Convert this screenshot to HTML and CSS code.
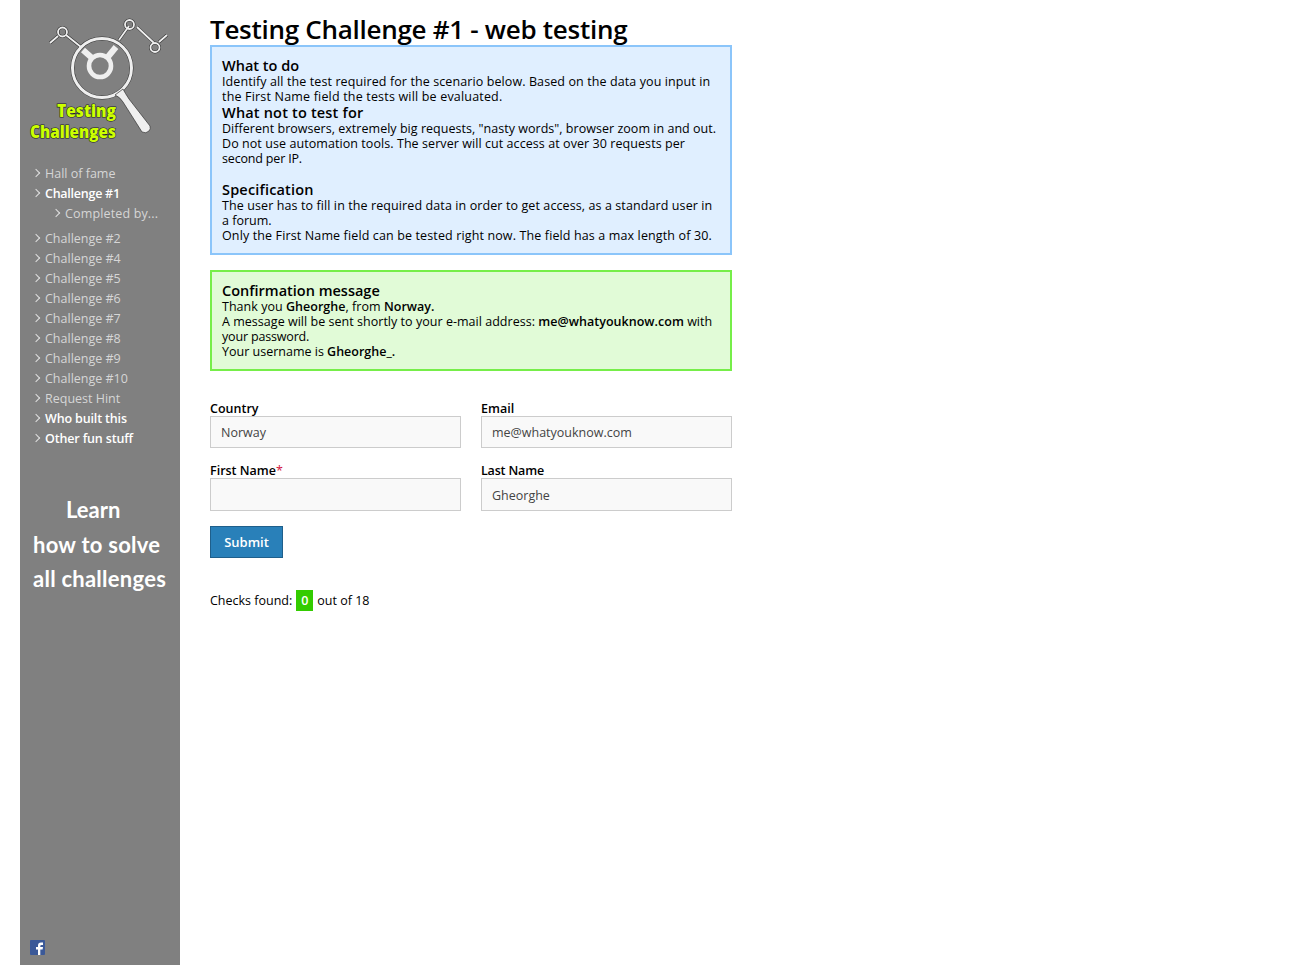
FILE: index.html
```
<!DOCTYPE html>
<html lang="en">
<head>
<meta charset="utf-8">
<title>Testing Challenge #1 - web testing</title>
<link rel="stylesheet" href="styles.css">
</head>
<body>
<aside class="sidebar">
  <svg class="logo" width="140" height="130" viewBox="0 0 140 130" role="img" aria-label="Testing Challenges">
    <g fill="none" stroke="#333" stroke-width="3">
      <path d="M20 28l8-7M36 20l15 12M89 25l10-14M107 12l17 16M129 27l8-7"/>
      <circle cx="32.500" cy="17" r="4.500"/><circle cx="99.500" cy="9.500" r="4.500"/><circle cx="125" cy="32.500" r="4.500"/>
      <circle cx="72" cy="53" r="29.500" stroke-width="4"/>
    </g>
    <g fill="none" stroke="#efefef" stroke-width="1.800">
      <path d="M20 28l8-7M36 20l15 12M89 25l10-14M107 12l17 16M129 27l8-7"/>
      <circle cx="32.500" cy="17" r="4.500"/><circle cx="99.500" cy="9.500" r="4.500"/><circle cx="125" cy="32.500" r="4.500"/>
      <circle cx="72" cy="53" r="29.500" stroke-width="3"/>
      <circle cx="70" cy="51" r="11" stroke-width="4.600"/>
      <path d="M53 35l9 8M86 32l-9 11" stroke-width="6"/>
    </g>
    <path d="M85 80l8-6q2 4 6 10l21 27q1 3-1 5-3 3-7 1L93 87q-3-5-8-7z" fill="#efefef" stroke="#333" stroke-width=".7"/>
    <g class="logo-text">
      <text x="27" y="102" textLength="59" lengthAdjust="spacingAndGlyphs">Testing</text>
      <text x="0" y="123" textLength="86" lengthAdjust="spacingAndGlyphs">Challenges</text>
    </g>
  </svg>
  <nav class="menu">
    <a class="item" href="#">Hall of fame</a>
    <a class="item active narrow" href="#">Challenge #1</a>
    <a class="item sub" href="#">Completed by...</a>
    <a class="item" href="#">Challenge #2</a>
    <a class="item" href="#">Challenge #4</a>
    <a class="item" href="#">Challenge #5</a>
    <a class="item" href="#">Challenge #6</a>
    <a class="item" href="#">Challenge #7</a>
    <a class="item" href="#">Challenge #8</a>
    <a class="item" href="#">Challenge #9</a>
    <a class="item" href="#">Challenge #10</a>
    <a class="item" href="#">Request Hint</a>
    <a class="item active" href="#">Who built this</a>
    <a class="item active" href="#">Other fun stuff</a>
  </nav>
  <div class="learn"><span class="first">Learn</span><span>how to solve</span><span>all challenges</span></div>
  <svg class="fb" width="15" height="15" viewBox="0 0 15 15"><rect width="15" height="15" rx="1" fill="#3b5998"/><path d="M8 15V9.500H6V7h2V5.500Q8 2.500 11 2.500h2V5h-1.500Q10.300 5 10.300 6v1H13l-.4 2.500h-2.300V15z" fill="#fff"/></svg>
</aside>
<main class="content">
  <h1>Testing Challenge #1 - web testing</h1>
  <section class="box info">
    <h2>What to do</h2>
    <p><span class="ls10">Identify all the test required for the scenario below. Based on the data you input in</span><br>
    <span class="ls18">the First Name field the tests will be evaluated.</span></p>
    <h2 class="ls18">What not to test for</h2>
    <p><span class="ls3">Different browsers, extremely big requests, "nasty words", browser zoom in and out.</span><br>
    <span class="ls7">Do not use automation tools. The server will cut access at over 30 requests per</span><br>
    <span class="lsn">second per IP.</span></p>
    <h2 class="spec ls18">Specification</h2>
    <p><span class="ls10">The user has to fill in the required data in order to get access, as a standard user in</span><br>
    a forum.<br>
    <span class="ls13">Only the First Name field can be tested right now. The field has a max length of 30.</span></p>
  </section>
  <section class="box ok">
    <h2>Confirmation message</h2>
    <p><span class="ls3">Thank you <b>Gheorghe</b>, from <b>Norway.</b></span><br>
    <span class="ls3">A message will be sent shortly to your e-mail address: <b>me@whatyouknow.com</b> with</span><br>
    <span class="lsn">your password.</span><br>
    Your username is <b>Gheorghe_.</b></p>
  </section>
  <form class="form">
    <label>Country<input value="Norway"></label>
    <label>Email<input value="me@whatyouknow.com"></label>
    <label class="tall">First Name<i class="req">*</i><input></label>
    <label class="tall"><span class="lsn">Last Name</span><input value="Gheorghe"></label>
    <button type="button">Submit</button>
  </form>
  <p class="checks"><span>Checks found:</span> <b class="count">0</b> <span>out of 18</span></p>
</main>
</body>
</html>
```
FILE: styles.css
```
* { box-sizing: border-box; }
body {
  margin: 0 0 0 20px;
  display: flex;
  height: 965px;
  overflow: hidden;
  background: #fff;
  color: #000;
  font: 12.5px/15px "Trebuchet MS", "Open Sans", sans-serif;
}
.sidebar {
  width: 160px;
  height: 965px;
  padding: 15px 10px 10px;
  background: #808080;
  display: flex;
  flex-direction: column;
}
.logo { display: block; overflow: visible; }
.logo-text {
  font: 800 17px "Trebuchet MS", "Open Sans", sans-serif;
  fill: #cf0;
  stroke: #222;
  stroke-width: 1.2px;
  paint-order: stroke;
}
.menu { display: flex; flex-direction: column; margin-top: 18px; }
.item {
  display: flex;
  align-items: center;
  height: 20px;
  padding-left: 4px;
  color: #d6d6d6;
  font-weight: 500;
  text-decoration: none;
  white-space: nowrap;
}
.item::before {
  content: "";
  width: 5px;
  height: 5px;
  margin: 0 6px 0 -1px;
  border: solid #e0e0e0;
  border-width: 1px 1px 0 0;
  transform: rotate(45deg);
}
.active { color: #fff; font-weight: 600; letter-spacing: -.15px; }
.narrow { letter-spacing: -.25px; }
.sub { margin: 0 0 5px 20px; letter-spacing: .15px; }
.learn {
  display: flex;
  flex-direction: column;
  margin: 45px 0 0 3px;
  color: #fff;
  font: bold 22px/34.500px Lato, sans-serif;
  letter-spacing: .25px;
  white-space: nowrap;
}
.first { margin-left: 33px; letter-spacing: 0; }
.fb { margin-top: auto; }
.content { width: 522px; margin-left: 30px; white-space: nowrap; }
h1 {
  margin: 14px 0 1px;
  font-size: 26px;
  line-height: 30px;
  font-weight: 600;
  letter-spacing: -.28px;
}
h2 { margin: 0; font-size: 14.5px; line-height: 17px; font-weight: 600; }
p { margin: 0; }
b { font-weight: 600; }
.ls3 { letter-spacing: .03px; }
.ls7 { letter-spacing: .07px; }
.ls10 { letter-spacing: .1px; }
.ls13 { letter-spacing: .13px; }
.ls18 { letter-spacing: .18px; }
.lsn { letter-spacing: -.17px; }
.box { padding: 10px; border: 2px solid #8bc5fa; margin-bottom: 15px; }
.info { background: #e0efff; }
.ok { background: #e1fbd7; border-color: #76ee49; }
.spec { margin-top: 15px; }
.form {
  display: grid;
  grid-template-columns: 251px 251px;
  gap: 15px 20px;
  margin-top: 30px;
}
label { font-weight: 600; }
input {
  display: block;
  width: 251px;
  height: 32px;
  padding: 0 10px;
  border: 1px solid #ccc;
  background: #f9f9f9;
  color: #444;
  font: inherit;
  font-weight: 400;
}
.tall input { height: 33px; padding-top: 1px; }
.req { color: #d2143c; font-weight: 400; font-style: normal; }
button {
  width: 73px;
  height: 32px;
  padding: 0;
  border: 1px solid #1f5f8b;
  background: #2980b9;
  color: #fff;
  font: inherit;
  font-size: 13px;
  font-weight: 600;
}
.checks { display: flex; gap: 4px; margin-top: 32px; line-height: 21px; }
.count { width: 17px; background: #3c0; color: #fff; text-align: center; }
```
